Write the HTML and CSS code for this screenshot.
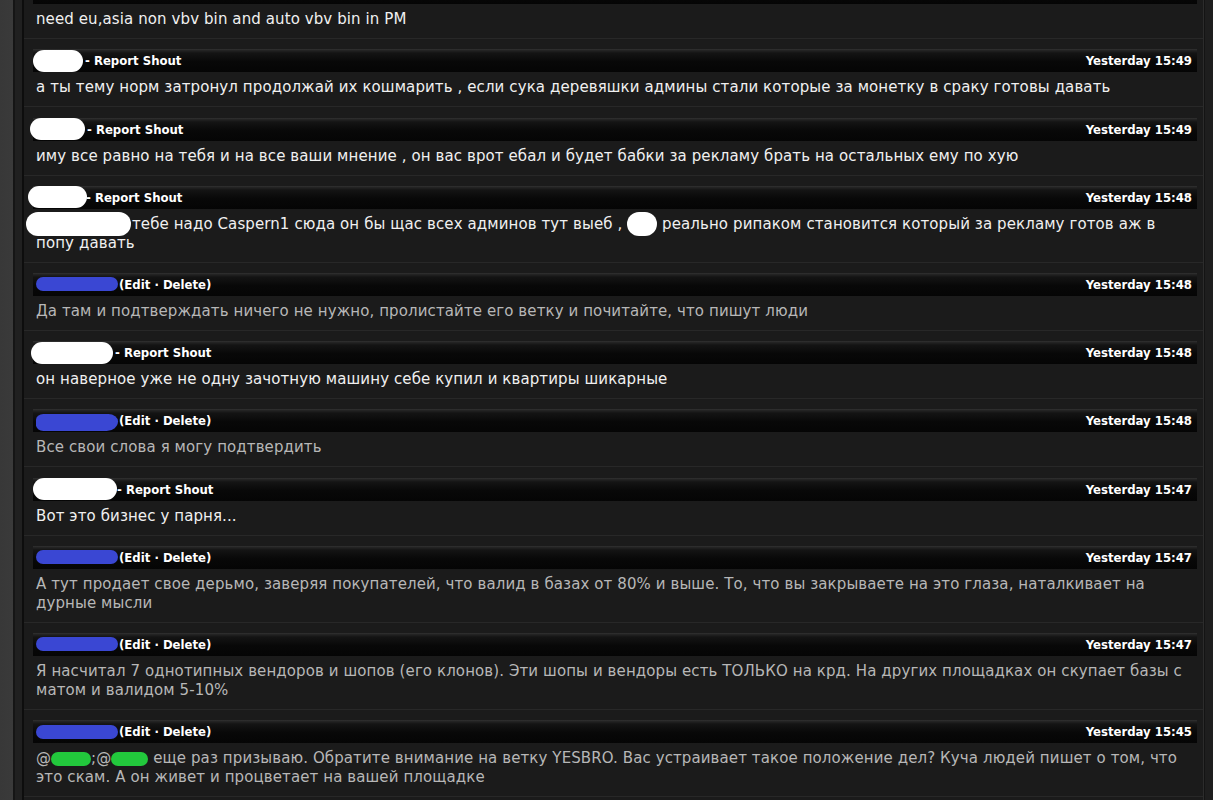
FILE: index.html
```html
<!DOCTYPE html>
<html lang="ru">
<head>
<meta charset="utf-8">
<title>Shoutbox</title>
<link rel="stylesheet" href="styles.css">
</head>
<body>
<div class="frame">
  <div class="gutter-left"></div>
  <div class="main">
    <div class="list">
      <div class="post">
        <div class="head"></div>
        <div class="msg light">need eu,asia non vbv bin and auto vbv bin in PM</div>
      </div>
      <div class="post">
        <div class="head"><span class="who"><span class="pill white w1"></span><span class="act">- Report Shout</span></span><span class="time">Yesterday 15:49</span></div>
        <div class="msg light">а ты тему норм затронул продолжай их кошмарить , если сука деревяшки админы стали которые за монетку в сраку готовы давать</div>
      </div>
      <div class="post">
        <div class="head"><span class="who"><span class="pill white w2"></span><span class="act">- Report Shout</span></span><span class="time">Yesterday 15:49</span></div>
        <div class="msg light">иму все равно на тебя и на все ваши мнение , он вас врот ебал и будет бабки за рекламу брать на остальных ему по хую</div>
      </div>
      <div class="post">
        <div class="head"><span class="who"><span class="pill white w3"></span><span class="act">- Report Shout</span></span><span class="time">Yesterday 15:48</span></div>
        <div class="msg light"><span class="pill white inl-big"></span>тебе надо Caspern1 сюда он бы щас всех админов тут выеб , <span class="pill white inl-dot"></span> реально рипаком становится который за рекламу готов аж в<br>попу давать</div>
      </div>
      <div class="post">
        <div class="head"><span class="who"><span class="pill blue"></span><span class="act">(Edit · Delete)</span></span><span class="time">Yesterday 15:48</span></div>
        <div class="msg dim">Да там и подтверждать ничего не нужно, пролистайте его ветку и почитайте, что пишут люди</div>
      </div>
      <div class="post">
        <div class="head"><span class="who"><span class="pill white w5"></span><span class="act">- Report Shout</span></span><span class="time">Yesterday 15:48</span></div>
        <div class="msg light">он наверное уже не одну зачотную машину себе купил и квартиры шикарные</div>
      </div>
      <div class="post">
        <div class="head"><span class="who"><span class="pill blue tail"></span><span class="act">(Edit · Delete)</span></span><span class="time">Yesterday 15:48</span></div>
        <div class="msg dim">Все свои слова я могу подтвердить</div>
      </div>
      <div class="post">
        <div class="head"><span class="who"><span class="pill white w7"></span><span class="act">- Report Shout</span></span><span class="time">Yesterday 15:47</span></div>
        <div class="msg light">Вот это бизнес у парня...</div>
      </div>
      <div class="post">
        <div class="head"><span class="who"><span class="pill blue"></span><span class="act">(Edit · Delete)</span></span><span class="time">Yesterday 15:47</span></div>
        <div class="msg dim">А тут продает свое дерьмо, заверяя покупателей, что валид в базах от 80% и выше. То, что вы закрываете на это глаза, наталкивает на<br>дурные мысли</div>
      </div>
      <div class="post">
        <div class="head"><span class="who"><span class="pill blue"></span><span class="act">(Edit · Delete)</span></span><span class="time">Yesterday 15:47</span></div>
        <div class="msg dim">Я насчитал 7 однотипных вендоров и шопов (его клонов). Эти шопы и вендоры есть ТОЛЬКО на крд. На других площадках он скупает базы с<br>матом и валидом 5-10%</div>
      </div>
      <div class="post">
        <div class="head"><span class="who"><span class="pill blue"></span><span class="act">(Edit · Delete)</span></span><span class="time">Yesterday 15:45</span></div>
        <div class="msg dim">@<span class="pill green g1"></span>;@<span class="pill green g2"></span> еще раз призываю. Обратите внимание на ветку YESBRO. Вас устраивает такое положение дел? Куча людей пишет о том, что<br>это скам. А он живет и процветает на вашей площадке</div>
      </div>
    </div>
  </div>
  <div class="gutter-right"></div>
</div>
</body>
</html>
```

FILE: styles.css
```css
* { box-sizing: border-box; }
html, body { margin: 0; padding: 0; height: 100%; background: #1b1b1b; }
body { overflow: hidden; }

.frame {
  display: flex;
  height: 800px;
  overflow: hidden;
}

.gutter-left {
  width: 24px;
  flex: none;
  background: linear-gradient(to right, #383838 0, #3a3a3a 13px, #151515 13px, #151515 15px, #202020 15px, #202020 22px, #0d0d0d 22px, #0d0d0d 24px);
}

.gutter-right {
  width: 10px;
  flex: none;
  background: linear-gradient(to right, #2c2c2c 0, #2c2c2c 1px, #141414 1px, #141414 2px, #1e1e1e 2px);
}

.main {
  flex: 1;
  background: #1b1b1b;
  overflow: hidden;
}

.list {
  margin-top: -29px;
}

.post {
  padding: 10.2px 6px 9px 9px;
  border-bottom: 1px solid #282828;
}

.head {
  height: 23px;
  display: flex;
  align-items: center;
  justify-content: space-between;
  padding: 0 5px 0 0;
  background: linear-gradient(to bottom, #333 0, #262626 1px, #141414 4px, #080808 55%, #050505 100%);
  font-family: "DejaVu Sans Condensed", "DejaVu Sans", sans-serif;
  font-weight: bold;
  font-size: 13px;
  color: #fff;
}

.who {
  display: flex;
  align-items: center;
}

.act { white-space: nowrap; }

.time { white-space: nowrap; }

.pill {
  display: inline-block;
  vertical-align: middle;
  border-radius: 999px;
}

.white { background: #fff; height: 22px; margin-right: 2px; }
.w1 { width: 50px; margin-left: 0; }
.w2 { width: 55px; margin-left: -3px; }
.w3 { width: 59px; margin-left: -5px; margin-right: -1px; }
.w5 { width: 82px; margin-left: -2px; }
.w7 { width: 84px; margin-left: 0; margin-right: 0; }

.blue {
  background: #3a47d3;
  width: 82px;
  height: 14px;
  margin-left: 3px;
  margin-right: 1px;
}
.tail { border-radius: 9px 12px 14px 9px / 7px 9px 12px 7px; height: 17px; margin-top: 4px; }

.msg {
  padding: 6px 0 0 3px;
  font-family: "DejaVu Sans", Verdana, sans-serif;
  font-size: 15px;
  line-height: 19px;
  letter-spacing: 0.1px;
  white-space: nowrap;
}
.light { color: #f0f0f0; }
.dim { color: #b7b7b7; }

.inl-big { width: 105px; height: 24px; margin: -3px 1px -3px -10px; vertical-align: middle; }
.inl-dot { width: 30px; height: 24px; margin: -3px 0; vertical-align: middle; }

.green { background: #22c83c; height: 14px; margin: -1px 0; vertical-align: -2px; }
.g1 { width: 40px; }
.g2 { width: 37px; }
```
